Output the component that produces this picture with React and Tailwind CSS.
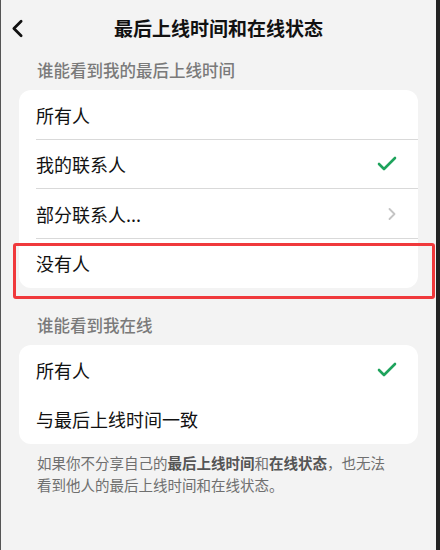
import React from 'react';
import { ChevronLeft, ChevronRight, Check } from 'lucide-react';

const font = { fontFamily: '"Noto Sans CJK SC", "Noto Sans", sans-serif' };

function Row({ label, right, divider }) {
  return (
    <div className="relative h-[49.5px] flex items-center pl-[17px] pr-[19px]">
      <span className="text-[18px] text-[#111] leading-none">{label}</span>
      <div className="ml-auto flex items-center">{right}</div>
      {divider && <div className="absolute bottom-0 left-[17px] right-0 h-px bg-[#d9d9d9]" />}
    </div>
  );
}

export default function App() {
  return (
    <div className="relative w-[440px] h-[550px] bg-[#f3f3f3] border-l border-[#555] border-r-4 border-r-[#222] overflow-hidden" style={font}>
      {/* Header */}
      <div className="relative h-[56px] flex items-center justify-center">
        <ChevronLeft className="absolute left-[2px] top-[14px] w-[29px] h-[29px] text-[#111]" strokeWidth={2.3} />
        <h1 className="text-[19px] font-semibold text-[#111]">最后上线时间和在线状态</h1>
      </div>

      <div className="px-[18px]">
        <div className="pl-[18px] pt-[3px] pb-[9px] text-[16.5px] font-medium text-[#7a7a7a] leading-[22px]">谁能看到我的最后上线时间</div>
        <div className="bg-white rounded-[12px] overflow-hidden">
          <Row label="所有人" divider />
          <Row label="我的联系人" divider right={<Check className="w-[24px] h-[24px] text-[#1ea35c]" strokeWidth={2.6} />} />
          <Row label="部分联系人..." divider right={<ChevronRight className="w-[20px] h-[20px] text-[#c4c4c4] -mr-[3px]" strokeWidth={2.2} />} />
          <Row label="没有人" />
        </div>

        <div className="pl-[18px] pt-[26px] pb-[9px] text-[16.5px] font-medium text-[#7a7a7a] leading-[22px]">谁能看到我在线</div>
        <div className="bg-white rounded-[12px] overflow-hidden">
          <Row label="所有人" right={<Check className="w-[24px] h-[24px] text-[#1ea35c]" strokeWidth={2.6} />} />
          <Row label="与最后上线时间一致" />
        </div>

        <p className="pl-[18px] pr-[20px] pt-[8px] text-[14.5px] leading-[22px] text-[#6f6f6f]">
          如果你不分享自己的<b className="font-semibold text-[#555]">最后上线时间</b>和<b className="font-semibold text-[#555]">在线状态</b>，也无法看到他人的最后上线时间和在线状态。
        </p>
      </div>

      {/* highlight */}
      <div className="absolute left-[12px] top-[243px] w-[422px] h-[56px] border-[3px] border-[#f0393c] rounded-[3px] pointer-events-none" />
    </div>
  );
}
